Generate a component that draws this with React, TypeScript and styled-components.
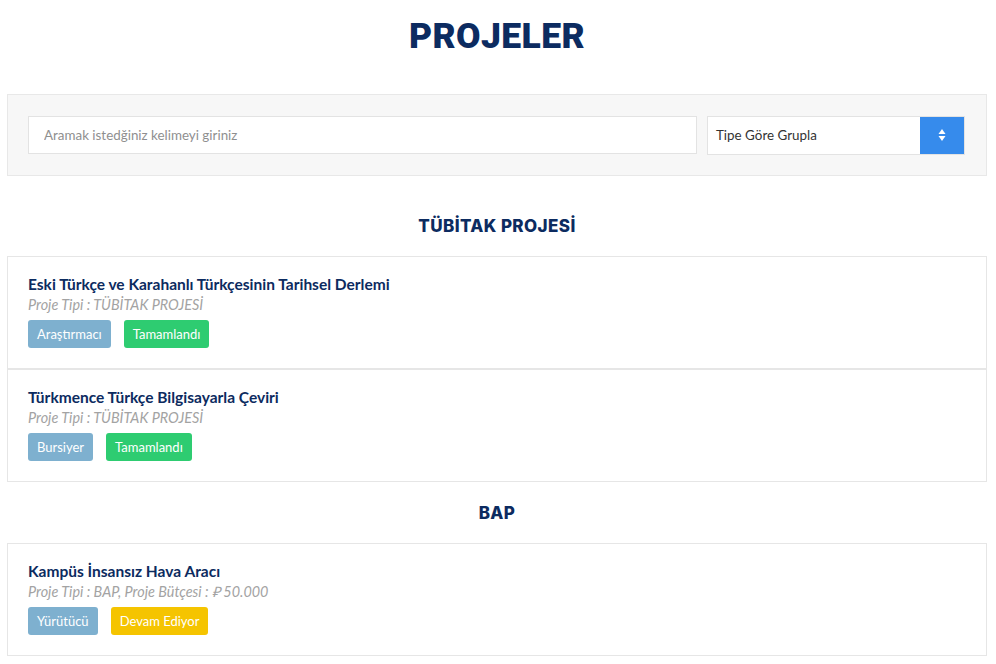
import React from 'react';
import styled, { createGlobalStyle } from 'styled-components';

const GlobalStyle = createGlobalStyle`
  * { box-sizing: border-box; }
  body {
    margin: 0;
    background: #ffffff;
    font-family: 'Lato', 'Open Sans', sans-serif;
    color: #333;
  }
`;

const Page = styled.div`
  padding: 0 9px 0 7px;
`;

const PageTitle = styled.h1`
  margin: 0;
  padding: 15px 0 0;
  height: 94px;
  text-align: center;
  font-family: 'Roboto', 'Inter', sans-serif;
  font-weight: 900;
  font-size: 35.5px;
  letter-spacing: 0.4px;
  line-height: 42px;
  color: #0c2b60;
`;

const FilterPanel = styled.div`
  display: flex;
  gap: 10px;
  align-items: center;
  height: 82px;
  padding: 0 21px 0 20px;
  background: #f7f7f7;
  border: 1px solid #e8e8e8;
`;

const SearchInput = styled.input`
  flex: 1;
  height: 38px;
  padding: 0 15px;
  border: 1px solid #e3e3e3;
  background: #fff;
  font-family: 'Lato', sans-serif;
  font-size: 13.4px;
  color: #555;
  outline: none;

  &::placeholder { color: #8f8f8f; }
`;

const SelectBox = styled.div`
  display: flex;
  width: 258px;
  height: 39px;
  border: 1px solid #e3e3e3;
  background: #fff;
`;

const SelectLabel = styled.div`
  flex: 1;
  display: flex;
  align-items: center;
  padding-left: 8px;
  font-size: 13.4px;
  color: #333;
`;

const SelectButton = styled.div`
  width: 44px;
  display: flex;
  align-items: center;
  justify-content: center;
  background: #368bec;
`;

const GroupTitle = styled.h2<{ $first?: boolean }>`
  margin: 0;
  height: ${({ $first }) => ($first ? '80px' : '61px')};
  padding-top: ${({ $first }) => ($first ? '39px' : '20px')};
  text-align: center;
  font-family: 'Inter', 'Lato', sans-serif;
  font-weight: 800;
  font-size: 17px;
  letter-spacing: 0.4px;
  line-height: 22px;
  color: #0c2b60;
`;

const CardList = styled.div`
  display: flex;
  flex-direction: column;
`;

const Card = styled.div`
  height: 113px;
  padding: 17px 20px 0;
  border: 1px solid #e6e6e6;
`;

const CardTitle = styled.div`
  font-weight: 700;
  font-size: 15.5px;
  line-height: 20px;
  color: #0c2b60;
`;

const CardMeta = styled.div`
  margin-top: 1px;
  font-style: italic;
  font-size: 14.4px;
  line-height: 20px;
  color: #a3a3a3;
`;

const BadgeRow = styled.div`
  display: flex;
  gap: 13px;
  margin-top: 5px;
`;

const Badge = styled.span<{ $tone: 'role' | 'done' | 'ongoing' }>`
  display: inline-flex;
  align-items: center;
  height: 28px;
  padding: 0 9px;
  border-radius: 3px;
  font-size: 13px;
  color: #fff;
  background: ${({ $tone }) =>
    $tone === 'role' ? '#7eb0cf' : $tone === 'done' ? '#2ecc71' : '#f5c400'};
`;

type Project = {
  title: string;
  meta: string;
  role: string;
  status: string;
  tone: 'done' | 'ongoing';
};

const GROUPS: { name: string; projects: Project[] }[] = [
  {
    name: 'TÜBİTAK PROJESİ',
    projects: [
      {
        title: 'Eski Türkçe ve Karahanlı Türkçesinin Tarihsel Derlemi',
        meta: 'Proje Tipi : TÜBİTAK PROJESİ',
        role: 'Araştırmacı',
        status: 'Tamamlandı',
        tone: 'done',
      },
      {
        title: 'Türkmence Türkçe Bilgisayarla Çeviri',
        meta: 'Proje Tipi : TÜBİTAK PROJESİ',
        role: 'Bursiyer',
        status: 'Tamamlandı',
        tone: 'done',
      },
    ],
  },
  {
    name: 'BAP',
    projects: [
      {
        title: 'Kampüs İnsansız Hava Aracı',
        meta: 'Proje Tipi : BAP, Proje Bütçesi : ₽ 50.000',
        role: 'Yürütücü',
        status: 'Devam Ediyor',
        tone: 'ongoing',
      },
    ],
  },
];

const SortIcon = () => (
  <svg width="8" height="12" viewBox="0 0 8 12">
    <path d="M4 0 L7.5 5 H0.5 Z" fill="#fff" />
    <path d="M4 12 L7.5 7 H0.5 Z" fill="#fff" />
  </svg>
);

export default function App() {
  return (
    <Page>
      <GlobalStyle />
      <PageTitle>PROJELER</PageTitle>
      <FilterPanel>
        <SearchInput placeholder="Aramak istedğiniz kelimeyi giriniz" />
        <SelectBox>
          <SelectLabel>Tipe Göre Grupla</SelectLabel>
          <SelectButton>
            <SortIcon />
          </SelectButton>
        </SelectBox>
      </FilterPanel>
      {GROUPS.map((g, i) => (
        <section key={g.name}>
          <GroupTitle $first={i === 0}>{g.name}</GroupTitle>
          <CardList>
            {g.projects.map((p) => (
              <Card key={p.title}>
                <CardTitle>{p.title}</CardTitle>
                <CardMeta>{p.meta}</CardMeta>
                <BadgeRow>
                  <Badge $tone="role">{p.role}</Badge>
                  <Badge $tone={p.tone}>{p.status}</Badge>
                </BadgeRow>
              </Card>
            ))}
          </CardList>
        </section>
      ))}
    </Page>
  );
}
